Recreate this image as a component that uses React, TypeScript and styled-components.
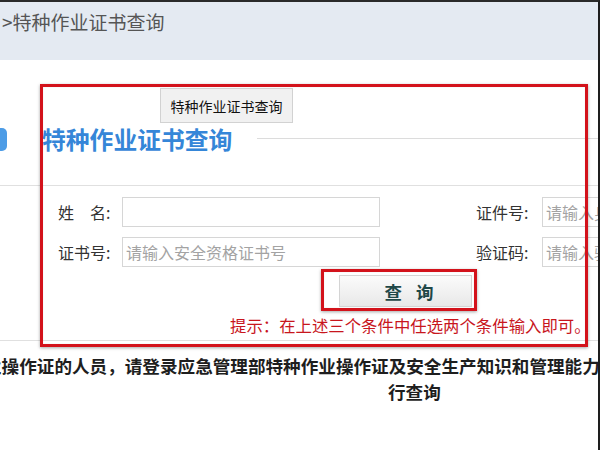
import styled, { createGlobalStyle } from "styled-components";

const GlobalStyle = createGlobalStyle`
  html, body {
    margin: 0;
    padding: 0;
    background: #fff;
  }
  body {
    font-family: "Noto Sans CJK SC", "Noto Sans", sans-serif;
    overflow: hidden;
  }
`;

const Page = styled.div`
  position: relative;
  width: 600px;
  height: 450px;
  box-sizing: border-box;
  border-top: 2px solid #2a2a2a;
  border-right: 2px solid #1e1e1e;
  overflow: hidden;
  background: #fff;
`;

const Breadcrumb = styled.div`
  height: 58px;
  box-sizing: border-box;
  padding: 8px 0 0 2px;
  background: #e4eaf2;
  color: #555;
  font-size: 19px;
  line-height: 24px;
  white-space: nowrap;
`;

const Main = styled.div`
  padding-top: 28px;
`;

const TabRow = styled.div`
  display: flex;
  height: 35px;
  padding-left: 160px;
`;

const Tab = styled.button`
  width: 133px;
  height: 35px;
  box-sizing: border-box;
  border: 1px solid #d2d2d2;
  background: #f1f1f1;
  color: #111;
  font-family: inherit;
  font-size: 14px;
  padding: 0;
  cursor: pointer;
`;

const HeadingRow = styled.div`
  display: flex;
  align-items: center;
  height: 32px;
`;

const Marker = styled.span`
  width: 12px;
  height: 23px;
  margin-left: -5px;
  border-radius: 5px;
  background: #4d9ce6;
  flex: none;
`;

const Heading = styled.h2`
  margin: 0 0 0 35px;
  font-size: 23.8px;
  line-height: 32px;
  font-weight: 700;
  color: #3586d8;
  white-space: nowrap;
`;

const HeadingRule = styled.span`
  flex: 1;
  height: 1px;
  margin-left: 25px;
  margin-top: -2px;
  background: #dcdcdc;
`;

const Divider = styled.div<{ $top: number }>`
  height: 1px;
  margin-top: ${(p) => p.$top}px;
  background: #e0e0e0;
`;

const Form = styled.div`
  display: grid;
  grid-template-columns: 64px 258px 162px 150px;
  row-gap: 10px;
  padding: 11px 0 0 58px;
  width: 700px;
`;

const Label = styled.label<{ $right?: boolean }>`
  display: flex;
  align-items: center;
  height: 30px;
  padding-left: ${(p) => (p.$right ? "96px" : "0")};
  color: #333;
  font-size: 16px;
  white-space: nowrap;
`;

const Input = styled.input`
  height: 30px;
  box-sizing: border-box;
  border: 1px solid #d6d6d6;
  padding: 0 3px;
  font-family: inherit;
  font-size: 16px;
  color: #333;
  outline: none;
  &::placeholder {
    color: #a3a3a3;
  }
`;

const ButtonRow = styled.div`
  display: flex;
  padding: 8px 0 0 339px;
`;

const QueryButton = styled.button`
  width: 133px;
  height: 32px;
  box-sizing: border-box;
  border: 1px solid #d4d4d4;
  background: linear-gradient(#fbfbfb, #e8e8e8);
  color: #1f4747;
  font-family: inherit;
  font-size: 17.5px;
  font-weight: 700;
  letter-spacing: 5px;
  padding: 0 0 0 12px;
  cursor: pointer;
`;

const Hint = styled.p`
  margin: 8px 0 0;
  padding-left: 230px;
  color: #c8161d;
  font-size: 16.4px;
  line-height: 20px;
  white-space: nowrap;
`;

const Notice = styled.div`
  padding-top: 12px;
  color: #1e1e1e;
  font-size: 17.6px;
  font-weight: 700;
  line-height: 26px;
  white-space: nowrap;
`;

const NoticeLine = styled.div<{ $indent: number }>`
  margin-left: ${(p) => p.$indent}px;
`;

const Highlight = styled.div<{ $top: number; $left: number; $w: number; $h: number }>`
  position: absolute;
  top: ${(p) => p.$top}px;
  left: ${(p) => p.$left}px;
  width: ${(p) => p.$w}px;
  height: ${(p) => p.$h}px;
  box-sizing: border-box;
  border: 3px solid #d3121b;
  box-shadow: 0 1px 3px rgba(0, 0, 0, 0.35), inset 0 0 1px rgba(0, 0, 0, 0.2);
  pointer-events: none;
`;

export default function App() {
  return (
    <>
      <GlobalStyle />
      <Page>
        <Breadcrumb>&gt;特种作业证书查询</Breadcrumb>
        <Main>
          <TabRow>
            <Tab>特种作业证书查询</Tab>
          </TabRow>
          <HeadingRow>
            <Marker />
            <Heading>特种作业证书查询</Heading>
            <HeadingRule />
          </HeadingRow>
          <Divider $top={30} />
          <Form>
            <Label>姓　名:</Label>
            <Input />
            <Label $right>证件号:</Label>
            <Input placeholder="请输入身份证号" />
            <Label>证书号:</Label>
            <Input placeholder="请输入安全资格证书号" />
            <Label $right>验证码:</Label>
            <Input placeholder="请输入验证码" />
          </Form>
          <ButtonRow>
            <QueryButton>查 询</QueryButton>
          </ButtonRow>
          <Hint>提示：在上述三个条件中任选两个条件输入即可。</Hint>
          <Divider $top={5} />
          <Notice>
            <NoticeLine $indent={-16}>
              业操作证的人员，请登录应急管理部特种作业操作证及安全生产知识和管理能力考核合格信息查询平台进
            </NoticeLine>
            <NoticeLine $indent={388}>行查询</NoticeLine>
          </Notice>
        </Main>
        <Highlight $top={82} $left={40} $w={548} $h={263} />
        <Highlight $top={267} $left={321} $w={156} $h={42} />
      </Page>
    </>
  );
}
